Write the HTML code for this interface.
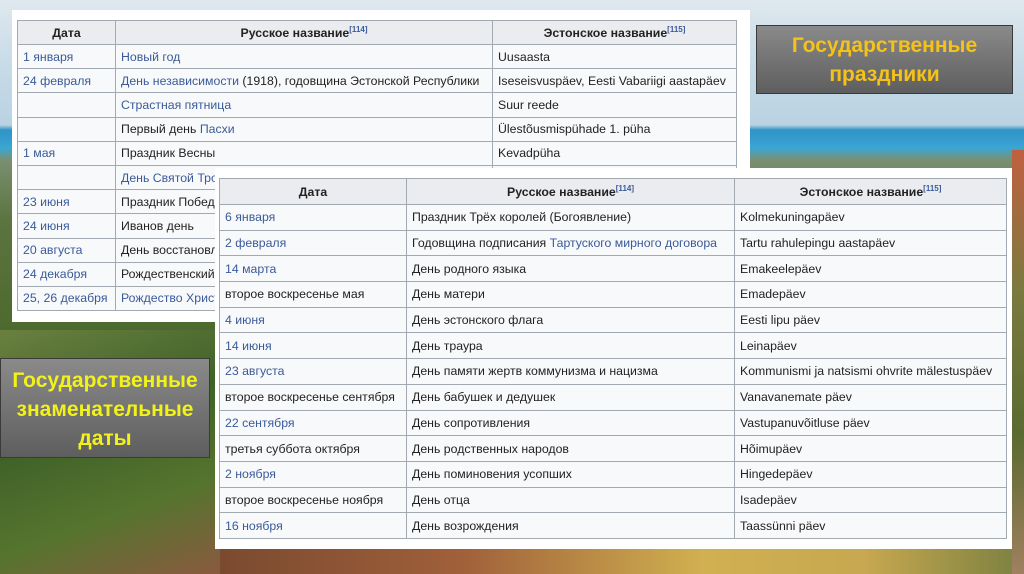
<!DOCTYPE html>
<html><head><meta charset="utf-8"><style>
*{margin:0;padding:0;box-sizing:border-box}
body{width:1024px;height:574px;overflow:hidden;position:relative;font-family:"Liberation Sans",Arial,sans-serif;
background:linear-gradient(180deg,#dfe8ee 0px,#c9dce8 60px,#b9d2e2 125px,#2f93c6 130px,#3aa6d4 148px,#7a8f70 160px,#5c7440 220px,#4d6a2e 330px,#6a7a3e 420px,#4e6a2c 480px,#8a6a40 540px,#7a5a3a 574px)}
.bg1{position:absolute;left:0;top:330px;width:220px;height:244px;background:linear-gradient(160deg,#6a8040,#3f6228 40%,#55742e 70%,#8a5a40)}
.bg2{position:absolute;left:220px;top:545px;width:804px;height:29px;background:linear-gradient(90deg,#7a4a30,#a0603a 30%,#d0b050 60%,#c8a850 80%,#7a8040)}
.bg3{position:absolute;left:1012px;top:150px;width:12px;height:424px;background:linear-gradient(180deg,#c06040,#7a7a40,#5a6a30,#a08060)}
.panel{position:absolute;background:#fff}
table{position:absolute;border-collapse:collapse;font-size:12.3px;color:#222;background:#f8f9fa}
td,th{border:1px solid #a2a9b1;padding:0 5px;white-space:nowrap;overflow:hidden;text-align:left;font-weight:normal}
th{background:#eaecf0;font-weight:bold;text-align:center}
sup{font-size:8px;vertical-align:5px;color:#3a5a9a}
a,.l{color:#3a5a9a}
.t1 tr{height:24.2px}
.t2 tr{height:25.7px}
.box{position:absolute;background:linear-gradient(180deg,#8a8a8a,#5e5e5e);border:1px solid #3a3a3a;font-weight:bold;text-align:center;font-size:21px;line-height:29px}
</style></head><body>
<div class="bg1"></div><div class="bg2"></div><div class="bg3"></div>
<div class="panel" style="left:12px;top:10px;width:738px;height:312px"></div>
<table class="t1" style="left:17px;top:20px;width:720px">
<tr style="height:24px"><th style="width:98px">Дата</th><th style="width:377px">Русское название<sup>[114]</sup></th><th>Эстонское название<sup>[115]</sup></th></tr>
<tr><td class="l">1 января</td><td class="l">Новый год</td><td>Uusaasta</td></tr>
<tr><td class="l">24 февраля</td><td><span class="l">День независимости</span> (1918), годовщина Эстонской Республики</td><td>Iseseisvuspäev, Eesti Vabariigi aastapäev</td></tr>
<tr><td></td><td class="l">Страстная пятница</td><td>Suur reede</td></tr>
<tr><td></td><td>Первый день <span class="l">Пасхи</span></td><td>Ülestõusmispühade 1. püha</td></tr>
<tr><td class="l">1 мая</td><td>Праздник Весны</td><td>Kevadpüha</td></tr>
<tr><td></td><td class="l">День Святой Троицы</td><td>Nelipühade 1. püha</td></tr>
<tr><td class="l">23 июня</td><td>Праздник Победы</td><td>Võidupüha</td></tr>
<tr><td class="l">24 июня</td><td>Иванов день</td><td>Jaanipäev</td></tr>
<tr><td class="l">20 августа</td><td>День восстановления независимости</td><td>Taasiseseisvumispäev</td></tr>
<tr><td class="l">24 декабря</td><td>Рождественский сочельник</td><td>Jõululaupäev</td></tr>
<tr><td class="l">25, 26 декабря</td><td class="l">Рождество Христово</td><td>Esimene jõulupüha</td></tr>
</table>
<div class="box" style="left:756px;top:25px;width:257px;height:69px;color:#f5c21a;padding-top:5px">Государственные<br>праздники</div>
<div class="box" style="left:0;top:358px;width:210px;height:100px;color:#f2f21a;padding-top:7px;line-height:29px">Государственные<br>знаменательные<br>даты</div>
<div class="panel" style="left:215px;top:168px;width:797px;height:381px"></div>
<table class="t2" style="left:219px;top:178px;width:788px">
<tr style="height:26px"><th style="width:187px">Дата</th><th style="width:328px">Русское название<sup>[114]</sup></th><th>Эстонское название<sup>[115]</sup></th></tr>
<tr><td class="l">6 января</td><td>Праздник Трёх королей (Богоявление)</td><td>Kolmekuningapäev</td></tr>
<tr><td class="l">2 февраля</td><td>Годовщина подписания <span class="l">Тартуского мирного договора</span></td><td>Tartu rahulepingu aastapäev</td></tr>
<tr><td class="l">14 марта</td><td>День родного языка</td><td>Emakeelepäev</td></tr>
<tr><td>второе воскресенье мая</td><td>День матери</td><td>Emadepäev</td></tr>
<tr><td class="l">4 июня</td><td>День эстонского флага</td><td>Eesti lipu päev</td></tr>
<tr><td class="l">14 июня</td><td>День траура</td><td>Leinapäev</td></tr>
<tr><td class="l">23 августа</td><td>День памяти жертв коммунизма и нацизма</td><td>Kommunismi ja natsismi ohvrite mälestuspäev</td></tr>
<tr><td>второе воскресенье сентября</td><td>День бабушек и дедушек</td><td>Vanavanemate päev</td></tr>
<tr><td class="l">22 сентября</td><td>День сопротивления</td><td>Vastupanuvõitluse päev</td></tr>
<tr><td>третья суббота октября</td><td>День родственных народов</td><td>Hõimupäev</td></tr>
<tr><td class="l">2 ноября</td><td>День поминовения усопших</td><td>Hingedepäev</td></tr>
<tr><td>второе воскресенье ноября</td><td>День отца</td><td>Isadepäev</td></tr>
<tr><td class="l">16 ноября</td><td>День возрождения</td><td>Taassünni päev</td></tr>
</table>
</body></html>
